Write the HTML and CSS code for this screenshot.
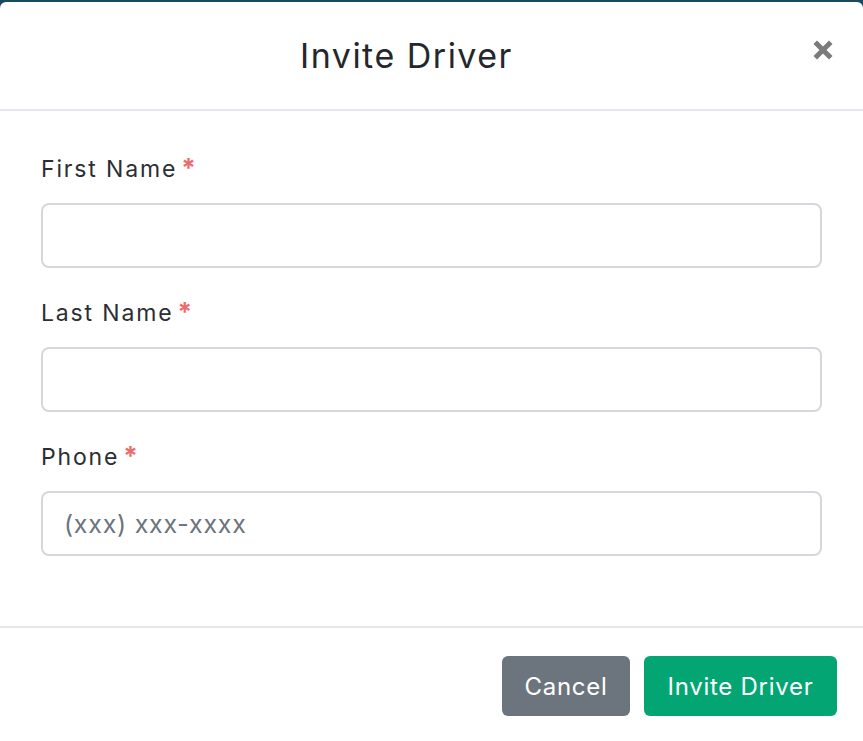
FILE: index.html
```html
<!doctype html>
<html>
<head>
  <title>Invite Driver</title>
  <link rel="stylesheet" href="styles.css">
</head>
<body>
  <div class="modal">
    <div class="modal-header">
      <h2 class="modal-title">Invite Driver</h2>
      <button class="close" type="button" aria-label="Close">
        <svg width="20" height="20" viewBox="0 0 20 20">
          <path d="M4 4 L16 16 M16 4 L4 16" stroke="#7b7b7b" stroke-width="5" stroke-linecap="square"/>
        </svg>
      </button>
    </div>
    <form class="modal-body">
      <div class="form-group">
        <label for="first-name">First Name<span class="req">*</span></label>
        <input id="first-name" class="form-control" autocomplete="off">
      </div>
      <div class="form-group">
        <label for="last-name">Last Name<span class="req">*</span></label>
        <input id="last-name" class="form-control" autocomplete="off">
      </div>
      <div class="form-group">
        <label for="phone">Phone<span class="req">*</span></label>
        <input id="phone" class="form-control" placeholder="(xxx) xxx-xxxx" autocomplete="off">
      </div>
    </form>
    <div class="modal-footer">
      <button class="btn btn-secondary" type="button">Cancel</button>
      <button class="btn btn-success" type="button">Invite Driver</button>
    </div>
  </div>
</body>
</html>
```

FILE: styles.css
```css
* { box-sizing: border-box; }
html, body { height: 100%; }
body { margin: 0; background: #1b4a5e; font-family: Inter, "Open Sans", sans-serif; color: #212529; overflow: hidden; }

.modal { margin-top: 2px; height: calc(100% - 2px); background: #fff; border-radius: 6px 6px 0 0; display: flex; flex-direction: column; }

.modal-header { height: 109px; border-bottom: 2px solid #e3e6ea; display: flex; align-items: center; padding: 0 30px 0 0; }
.modal-title { flex: 1; margin: 0; text-align: center; font-size: 34px; font-weight: 400; color: #24272b; letter-spacing: 0.044em; }
.close { background: none; border: 0; padding: 0; width: 20px; height: 20px; margin-bottom: 12px; cursor: pointer; }
.close svg { display: block; }

.modal-body { flex: 1; padding: 42px 41px 0 41px; margin: 0; }
.form-group { margin-bottom: 29px; }
.form-group label { display: block; font-size: 23px; line-height: 33px; margin-bottom: 17px; color: #2b2e33; letter-spacing: 0.08em; }
.req { color: #ef6b6b; font-size: 26px; font-weight: 700; margin-left: 4px; vertical-align: top; position: relative; top: -2px; letter-spacing: 0; }
.form-control { display: block; width: 100%; height: 65px; border: 2px solid #d4d8dd; border-radius: 8px; padding: 0 21px; font: inherit; font-size: 25px; letter-spacing: 0.03em; color: #495057; }
.form-control::placeholder { color: #6c757d; }

.modal-footer { border-top: 2px solid #e3e6ea; display: flex; justify-content: flex-end; gap: 14px; padding: 28px 26px 0 0; height: 115px; }
.btn { height: 60px; border: 0; border-radius: 6px; font: inherit; font-size: 24px; letter-spacing: 0.03em; color: #fff; padding: 0; cursor: pointer; }
.btn-secondary { background: #6c757d; width: 128px; }
.btn-success { background: #03a673; width: 193px; }
```
